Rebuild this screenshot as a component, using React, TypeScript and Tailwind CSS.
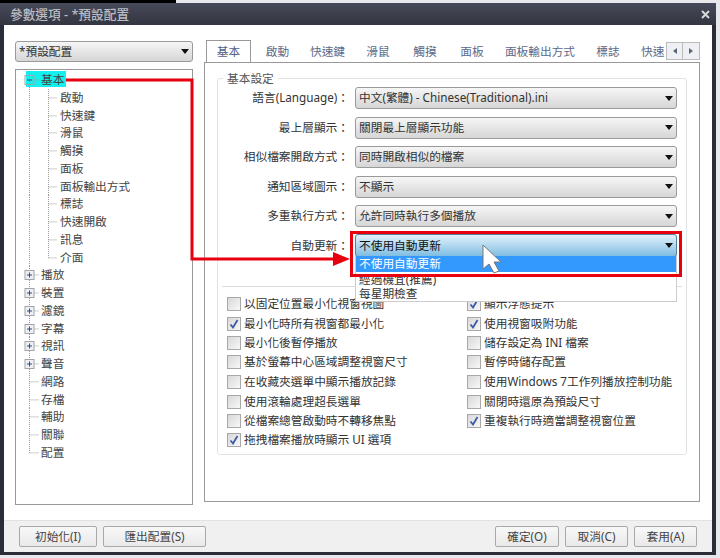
const selects = [
  ['語言(Language)：', '中文(繁體) - Chinese(Traditional).ini'],
  ['最上層顯示：', '關閉最上層顯示功能'],
  ['相似檔案開啟方式：', '同時開啟相似的檔案'],
  ['通知區域圖示：', '不顯示'],
  ['多重執行方式：', '允許同時執行多個播放'],
];

const tabs = [
  { label: '啟動', w: 'w-[53px]' },
  { label: '快速鍵', w: 'w-[47px]' },
  { label: '滑鼠', w: 'w-[54px]' },
  { label: '觸摸', w: 'w-[40px]' },
  { label: '面板', w: 'w-[54px]' },
  { label: '面板輸出方式', w: 'w-[82px]' },
  { label: '標誌', w: 'w-[54px]' },
];

const leftChecks = [
  { label: '以固定位置最小化視窗視圖', on: false, h: 'h-[20px]' },
  { label: '最小化時所有視窗都最小化', on: true, h: 'h-[20px]' },
  { label: '最小化後暫停播放', on: false, h: 'h-[19px]' },
  { label: '基於螢幕中心區域調整視窗尺寸', on: false, h: 'h-[19px]' },
  { label: '在收藏夾選單中顯示播放記錄', on: false, h: 'h-[20px]' },
  { label: '使用滾輪處理超長選單', on: false, h: 'h-[20px]' },
  { label: '從檔案總管啟動時不轉移焦點', on: false, h: 'h-[19px]' },
  { label: '拖拽檔案播放時顯示 UI 選項', on: true, h: 'h-[18px]' },
];

const rightChecks = [
  { label: '顯示浮態提示', on: true, h: 'h-[20px]' },
  { label: '使用視窗吸附功能', on: true, h: 'h-[20px]' },
  { label: '儲存設定為 INI 檔案', on: false, h: 'h-[19px]' },
  { label: '暫停時儲存配置', on: false, h: 'h-[19px]' },
  { label: '使用Windows 7工作列播放控制功能', on: false, h: 'h-[20px]' },
  { label: '關閉時還原為預設尺寸', on: false, h: 'h-[20px]' },
  { label: '重複執行時適當調整視窗位置', on: true, h: 'h-[19px]' },
];

const tree = [
  { label: '基本', level: 0, box: 'minus' },
  { label: '啟動', level: 1 },
  { label: '快速鍵', level: 1 },
  { label: '滑鼠', level: 1 },
  { label: '觸摸', level: 1 },
  { label: '面板', level: 1 },
  { label: '面板輸出方式', level: 1 },
  { label: '標誌', level: 1 },
  { label: '快速開啟', level: 1 },
  { label: '訊息', level: 1 },
  { label: '介面', level: 1, last: true },
  { label: '播放', level: 0, box: 'plus' },
  { label: '裝置', level: 0, box: 'plus' },
  { label: '濾鏡', level: 0, box: 'plus' },
  { label: '字幕', level: 0, box: 'plus' },
  { label: '視訊', level: 0, box: 'plus' },
  { label: '聲音', level: 0, box: 'plus' },
  { label: '網路', level: 0 },
  { label: '存檔', level: 0 },
  { label: '輔助', level: 0 },
  { label: '關聯', level: 0 },
  { label: '配置', level: 0, end: true },
];

function Caret() {
  return (
    <svg width="8" height="5" viewBox="0 0 8 5" className="shrink-0">
      <path d="M0 0h8L4 5z" fill="#111" />
    </svg>
  );
}

function Select({ value, focus, className }: { value: string; focus?: boolean; className: string }) {
  return (
    <div
      className={`flex items-center justify-between pl-[3px] pr-[3px] rounded-[3px] border ${
        focus
          ? 'border-[#5a7f9c] bg-gradient-to-b from-[#e3f2fb] to-[#7fbde2] text-[#111]'
          : 'border-[#9a9a9a] bg-gradient-to-b from-[#f6f6f6] to-[#d6d6d6] text-[#333]'
      } ${className}`}
    >
      <span className="whitespace-nowrap">{value}</span>
      <Caret />
    </div>
  );
}

function Check({ label, on, h }: { label: string; on: boolean; h: string }) {
  return (
    <div className={`flex items-center gap-[3px] ${h}`}>
      <span className="w-[14px] h-[14px] shrink-0 border border-[#a8a8a8] bg-gradient-to-br from-[#d8d8d8] to-[#f8f8f8] flex items-center justify-center">
        {on && (
          <svg width="10" height="10" viewBox="0 0 10 10">
            <path d="M1.5 5.5 4 8.5 8.5 1" fill="none" stroke="#3d5aa8" strokeWidth="1.8" />
          </svg>
        )}
      </span>
      <span className="whitespace-nowrap">{label}</span>
    </div>
  );
}

function TreeLines({ row }: { row: (typeof tree)[number] }) {
  const dot = { stroke: '#9a9a9a', strokeDasharray: '1 1', fill: 'none' };
  const m = 8.875;
  return (
    <svg width={row.level ? 44 : 25} height="17.75" className="shrink-0 relative">
      <path d={`M13.5 0V${row.end ? m : 17.75}`} {...dot} />
      {row.level === 0 && <path d={`M13.5 ${m}H23`} {...dot} />}
      {row.level === 1 && <path d={`M32.5 0V${row.last ? m : 17.75}M32.5 ${m}H41`} {...dot} />}
      {row.box && (
        <g>
          <rect x="9" y="4.5" width="9" height="9" fill={row.box === 'minus' ? 'none' : '#eef0f4'} stroke="#a0a4ac" />
          <path d={row.box === 'minus' ? 'M11 9h5' : 'M11 9h5M13.5 6.5v5'} stroke="#2f4f88" fill="none" />
        </g>
      )}
    </svg>
  );
}

function Btn({ label, w }: { label: string; w: string }) {
  return (
    <div className={`h-[21px] ${w} flex items-center justify-center rounded-[2px] border border-[#a9a9a9] bg-gradient-to-b from-[#f8f8f8] to-[#e9e9e9] text-[#444]`}>
      {label}
    </div>
  );
}

export default function App() {
  return (
    <div className="relative w-[720px] h-[558px] overflow-hidden bg-[#e6e8ec] text-[11.7px] leading-none text-[#333] font-['Noto_Sans','Noto_Sans_CJK_TC',sans-serif]">
      <div className="flex h-[3px]">
        <div className="w-[176px] bg-black" />
      </div>

      {/* window */}
      <div className="w-[716px] h-[552px] flex flex-col bg-[#2a2c38] rounded-t-[4px] pb-[3px]">
        <div className="h-[22px] shrink-0 flex items-center justify-between pl-[10px] pr-[6px] bg-gradient-to-b from-[#474a5a] to-[#33353f]">
          <span className="text-[12.7px] text-[#b9bcc4] font-medium">參數選項 - *預設配置</span>
          <svg width="9" height="9" viewBox="0 0 9 9">
            <path d="M1 1l7 7M8 1 1 8" stroke="#d8d8d8" strokeWidth="2" />
          </svg>
        </div>

        <div className="mx-[4px] flex-1 flex flex-col bg-white">
          <div className="flex-1 flex pt-[16px] pl-[11px]">
            {/* left column */}
            <div className="w-[178px] flex flex-col gap-[7px]">
              <Select value="*預設配置" className="h-[21px]" />
              <div className="h-[436px] border border-[#999] pt-[1px]">
                {tree.map((row) => (
                  <div key={row.label + row.level} className="relative h-[17.75px] flex items-center text-[#444]">
                    {row.box === 'minus' && (
                      <div className="absolute left-[10px] top-0 w-[40px] h-[16px] bg-[#14f0ee]" />
                    )}
                    <TreeLines row={row} />
                    <span className="relative whitespace-nowrap">{row.label}</span>
                  </div>
                ))}
              </div>
            </div>

            {/* right column */}
            <div className="ml-[11px] w-[496px] flex flex-col">
              <div className="h-[21px] flex items-end relative z-10">
                <div className="w-[45px] h-[22px] ml-[2px] border border-b-0 border-[#999] bg-white flex items-center justify-center text-[#53628a]">
                  基本
                </div>
                {tabs.map((t) => (
                  <div key={t.label} className={`${t.w} h-[21px] flex items-center justify-center text-[#5a6a8a] whitespace-nowrap`}>
                    {t.label}
                  </div>
                ))}
                <div className="w-[31px] h-[21px] pl-[6px] flex items-center text-[#5a6a8a] overflow-hidden whitespace-nowrap">快速</div>
                <div className="flex mb-[2px] h-[18px]">
                  <div className="w-[17px] border border-[#bbb] bg-[#eef0f4] flex items-center justify-center">
                    <svg width="4" height="6"><path d="M4 0v6L0 3z" fill="#5a6478" /></svg>
                  </div>
                  <div className="w-[17px] border border-l-0 border-[#bbb] bg-[#eef0f4] flex items-center justify-center">
                    <svg width="4" height="6"><path d="M0 0v6l4-3z" fill="#5a6478" /></svg>
                  </div>
                </div>
              </div>

              <div className="h-[440px] border border-[#999] pt-[15px] pl-[12px]">
                <div className="relative w-[470px] h-[377px] border border-[#dfe3e6] rounded-[3px] pt-[8px]">
                  <span className="absolute left-[5px] top-[-6px] px-[4px] bg-white text-[#555]">基本設定</span>

                  <div className="flex flex-col gap-[7.5px]">
                    {selects.map(([label, value]) => (
                      <div key={label} className="flex items-center h-[22px]">
                        <span className="w-[131px] text-right whitespace-nowrap">{label}</span>
                        <Select value={value} className="w-[322px] h-[22px] ml-[6px]" />
                      </div>
                    ))}
                    <div className="flex items-center h-[22px]">
                      <span className="w-[131px] text-right whitespace-nowrap">自動更新：</span>
                      <div className="relative w-[322px] ml-[6px]">
                        <Select value="不使用自動更新" focus className="h-[23px]" />
                        <div className="absolute left-0 top-[22px] w-[322px] h-[46px] bg-white border border-t-0 border-[#ccc] z-10">
                          <div className="h-[16px] bg-[#3399ff] text-white pl-[3px] flex items-center">不使用自動更新</div>
                          <div className="h-[14px] mt-[1px] pl-[3px] flex items-center text-[#333]">經過機宜(推薦)</div>
                          <div className="h-[14px] pl-[3px] flex items-center text-[#333]">每星期檢查</div>
                        </div>
                      </div>
                    </div>
                  </div>

                  <div className="mt-[29px] mx-[4px] border-t border-[#ddd]" />

                  <div className="mt-[7px] pl-[9px] flex">
                    <div className="w-[240px] flex flex-col">
                      {leftChecks.map((c) => <Check key={c.label} {...c} />)}
                    </div>
                    <div className="flex flex-col">
                      {rightChecks.map((c) => <Check key={c.label} {...c} />)}
                    </div>
                  </div>
                </div>
              </div>
            </div>
          </div>

          <div className="h-[32px] shrink-0 bg-[#f0f0f0] border-t border-[#e2e2e2] flex items-start justify-between pt-[5px] pl-[15px] pr-[15px]">
            <div className="flex gap-[6px]">
              <Btn label="初始化(I)" w="w-[78px]" />
              <Btn label="匯出配置(S)" w="w-[103px]" />
            </div>
            <div className="flex gap-[6px]">
              <Btn label="確定(O)" w="w-[64px]" />
              <Btn label="取消(C)" w="w-[63px]" />
              <Btn label="套用(A)" w="w-[63px]" />
            </div>
          </div>
        </div>
      </div>

      {/* red annotation + cursor */}
      <div className="absolute left-[350px] top-[231px] w-[332px] h-[46px] border-[3px] border-[#e8000f] z-20" />
      <svg width="720" height="558" className="absolute left-0 top-0 z-20 pointer-events-none">
        <path d="M66 80H192V259H336" fill="none" stroke="#e8000f" strokeWidth="3" />
        <path d="M333 252l17 7-17 7z" fill="#e8000f" />
        <path d="M483 245v24l6-5 5 9 5-2-5-9h7z" fill="#fff" stroke="#777" strokeWidth="1" />
      </svg>
    </div>
  );
}
